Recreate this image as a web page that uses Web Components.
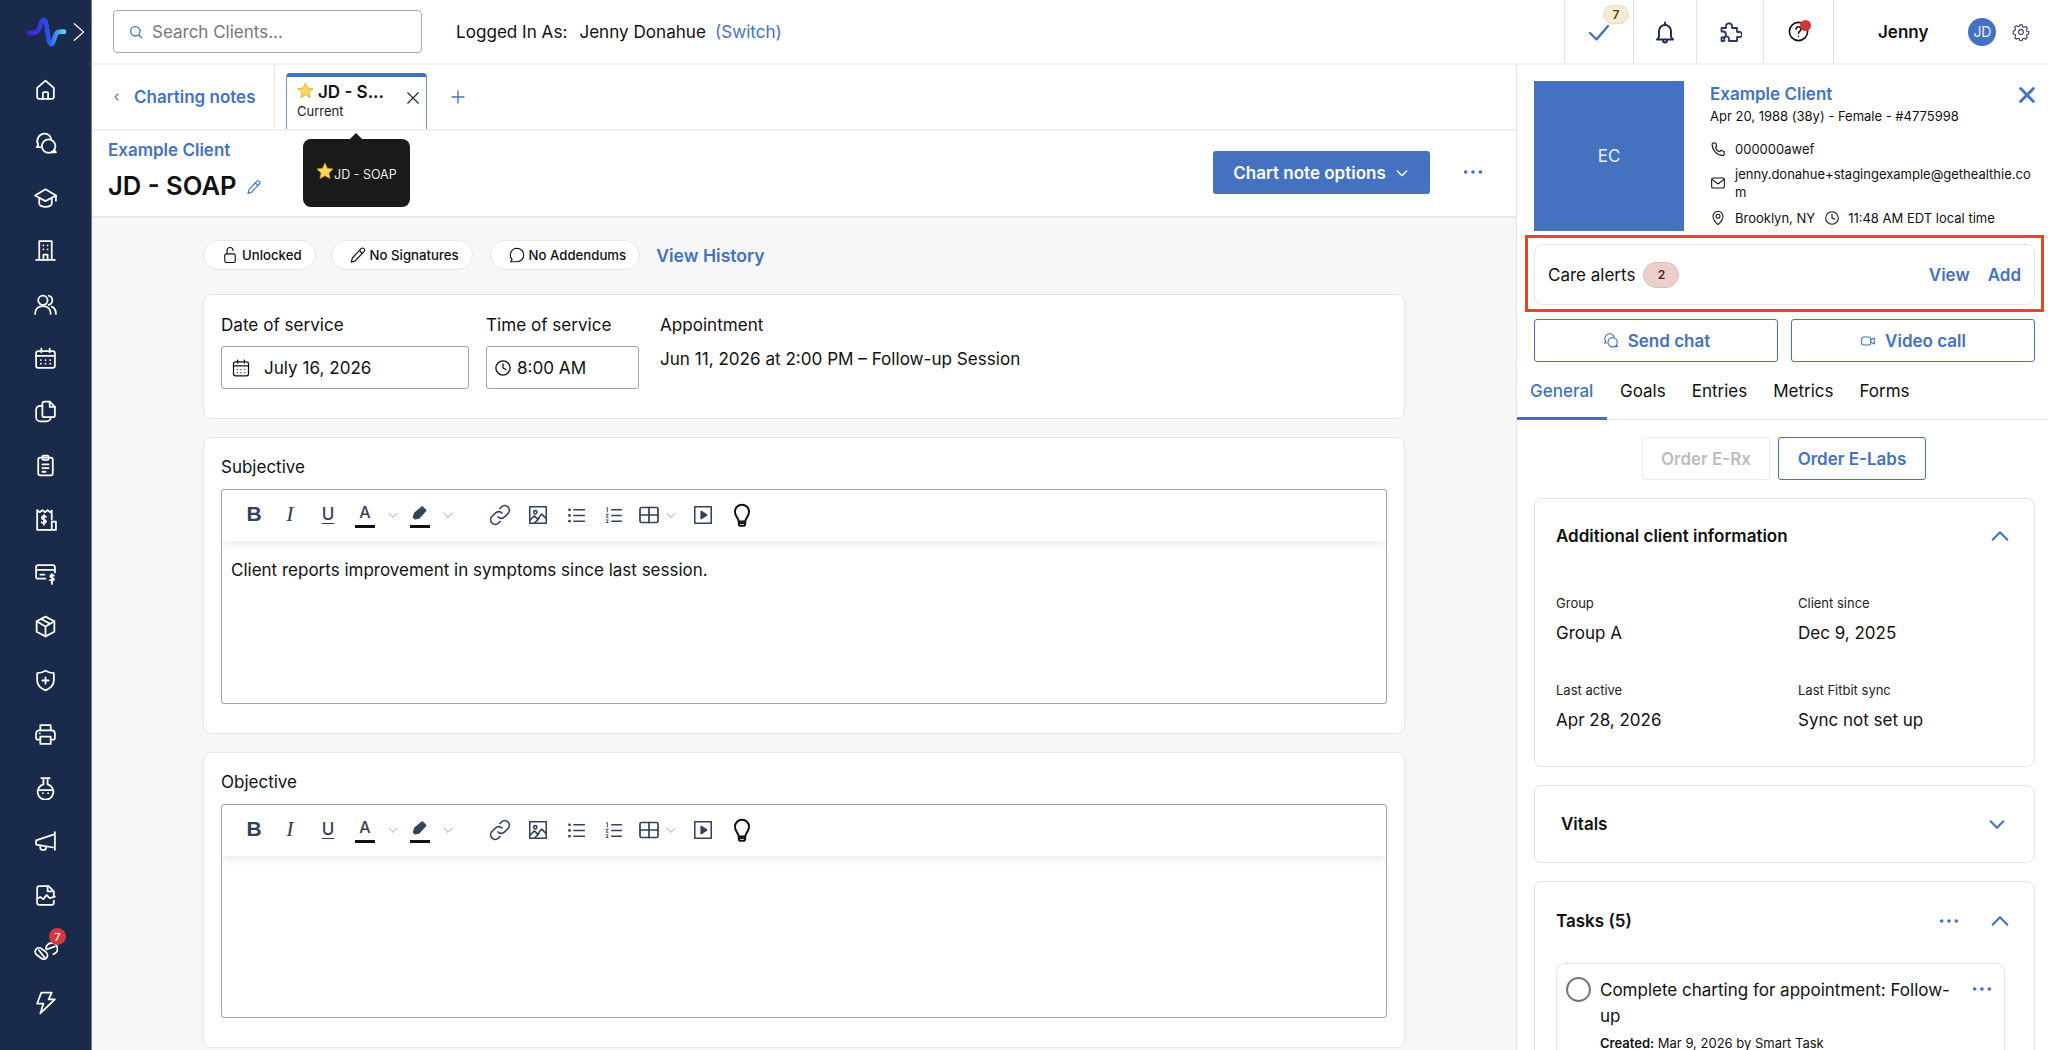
<!DOCTYPE html>
<html lang="en"><head><meta charset="utf-8"><title>Chart note</title>
<style>html,body{margin:0;padding:0;height:100%;overflow:hidden;background:#fff;font-family:Inter,"Liberation Sans",sans-serif;color:#111}</style>
</head><body>
<app-shell></app-shell>
<script>
const ICONS={
home:'<path d="M4 10.5 12 3.5l8 7V19a2 2 0 0 1-2 2H6a2 2 0 0 1-2-2z"/><path d="M9.5 21v-5.5a1 1 0 0 1 1-1h3a1 1 0 0 1 1 1V21"/>',
chats:'<path d="M7 15.5H3.5l1.6-2.2A7.2 7.2 0 0 1 10.300 2.500a7 7 0 0 1 7 4.500"/><circle cx="15" cy="14.500" r="6.500"/><path d="M18 20.500h4l-1.500-2"/>',
cap:'<path d="M12 4 2 10l10 5.500L22 10z"/><path d="M6 12.500V18c0 1.500 2.500 3 6 3s6-1.500 6-3v-5.500"/><path d="M22 10v5"/>',
building:'<path d="M6 21V3h12v18M3 21h18"/><path d="M10 21v-5h4v5M10 7h.01M14 7h.01M10 11h.01M14 11h.01"/>',
users:'<circle cx="9.500" cy="8" r="4.500"/><path d="M2 21c0-4.500 3-7.500 7.500-7.500s7.500 3 7.500 7.500"/><path d="M15 3.600a4.500 4.500 0 0 1 0 8.800M18 14c2.500 1 4 3.500 4 7"/>',
calendar:'<rect x="3" y="5" width="18" height="16" rx="2"/><path d="M3 9.500h18M8 2.500V6M16 2.500V6"/><path d="M7.500 13.500h.01M12 13.500h.01M16.500 13.500h.01M7.500 17h.01M12 17h.01M16.500 17h.01"/>',
files:'<path d="M11 2.500h5l5 5v8a2 2 0 0 1-2 2h-8a2 2 0 0 1-2-2v-11a2 2 0 0 1 2-2z"/><path d="M16 2.500v5h5"/><path d="M9 6.500H7a4 4 0 0 0-4 4v7a4 4 0 0 0 4 4h6a4 4 0 0 0 4-4"/>',
clip:'<rect x="5" y="4.500" width="14" height="17" rx="2"/><rect x="9" y="2.500" width="6" height="4" rx="1"/><path d="M9 11h6M9 14.500h6M9 18h3"/>',
receipt:'<path d="M16 22H4V3l2.500 2L9 3l2.500 2L14 3l2.500 2L18 3.500V12"/><path d="M18 14h4v8h-4zM16 22h2"/><path d="M12.500 9.500c-1-1-4-1-4 1s4 1 4 3.200-3 2-4.200 1M10.500 7.500v9.500"/>',
card:'<path d="M12 17H5a2 2 0 0 1-2-2V6a2 2 0 0 1 2-2h14a2 2 0 0 1 2 2v5"/><path d="M3 8.500h18M7 13h4"/><path d="M20 14c-1-1-3.500-1-3.500.7s3.500 1 3.500 2.800-2.500 1.700-3.800.8M18.200 12.500V22"/>',
box:'<path d="M12 2.500 20.500 7v10L12 21.500 3.500 17V7z"/><path d="M3.500 7 12 12l8.500-5M12 12v9.500M8 4.800l8.500 4.700"/>',
shield:'<path d="M12 2.500c2 1.500 5 2.500 8 2.500v7c0 4.500-3.500 7.500-8 9.500-4.500-2-8-5-8-9.500V5c3 0 6-1 8-2.500z"/><path d="M12 9v6M9 12h6"/>',
printer:'<path d="M7 8V3h10v5"/><path d="M7 17H5a2 2 0 0 1-2-2v-4a3 3 0 0 1 3-3h12a3 3 0 0 1 3 3v4a2 2 0 0 1-2 2h-2"/><rect x="7" y="14" width="10" height="7"/><path d="M6.500 11h.01"/>',
flask:'<path d="M8 3h8M10 3v6a7.500 7.500 0 1 0 4 0V3"/><path d="M5.500 14.500h13M9.500 17.500h.01M14.500 17.500h.01"/>',
mega:'<path d="M21 3v17M21 5 3 11v4l18 3"/><path d="M7 16v2a2 2 0 0 0 2 2h1.500a2 2 0 0 0 2-2v-.5"/>',
filechart:'<path d="M20 12V8l-5-5H6a2 2 0 0 0-2 2v14a2 2 0 0 0 2 2h12a2 2 0 0 0 2-2v-2"/><path d="M14 3v5h5"/><path d="M4 15l3-1.500 3 2 3-4 3 3 5-1.500"/>',
pills:'<rect x="1.500" y="13" width="13" height="7.500" rx="3.750" transform="rotate(38 8 16.750)"/><path d="m5.500 13.500 5.500 7"/><path d="M12.500 12a5.500 5.500 0 1 1 7 5.500"/><path d="M13 13l8-3"/>',
bolt:'<path d="M8 2.500h10l-3 6.500h6L7 22.500l3-9.500H4z"/>',
search:'<circle cx="11" cy="11" r="7"/><path d="m16.500 16.500 4 4"/>',
check:'<path d="m3 13 6.500 6.500L21 6"/>',
bell:'<path d="M6 17V11a6 6 0 0 1 12 0v6l2 2.500H4z"/><path d="M12 2.500V5M10 20.500a2 2 0 0 0 4 0"/>',
puzzle:'<path d="M3.500 8H7.500c.6 0 .9-.5.6-1a3 3 0 1 1 5.800 0c-.3.500 0 1 .6 1H19v3.500c0 .6.500.900 1 .6a2.700 2.700 0 1 1 0 4.800c-.5-.3-1 0-1 .6V21h-7.500c-.8 0-1-.6-.7-1.200a2.400 2.400 0 1 0-4.400 0c.3.600 0 1.200-.7 1.200H3.500v-3.500h1.500a3 3 0 0 0 0-6H3.500z"/>',
help:'<circle cx="12" cy="12" r="9.500"/><path d="M9.500 9.500a2.500 2.500 0 1 1 3.800 2.200c-.8.500-1.300 1-1.300 2M12 17h.01"/>',
gear:'<circle cx="12" cy="12" r="3.200"/><path d="M10.300 2.500h3.400l.5 2.600 1.800.8 2.300-1.400 2.200 2.400-1.400 2.200.7 1.800 2.600.6v3.200l-2.600.6-.7 1.800 1.400 2.200-2.200 2.400-2.300-1.400-1.800.8-.5 2.600h-3.400l-.5-2.600-1.800-.8-2.300 1.400-2.200-2.400 1.400-2.200-.7-1.800-2.600-.6V10.500l2.600-.6.700-1.800-1.400-2.200 2.200-2.400 2.300 1.400 1.800-.8z"/>',
close:'<path d="M5 5l14 14M19 5 5 19"/>',
plus:'<path d="M12 4v16M4 12h16"/>',
chevL:'<path d="m14 6-6 6 6 6"/>',chevR:'<path d="m8 3 10 9-10 9"/>',chevD:'<path d="m5 9 7 7 7-7"/>',chevU:'<path d="m4 16 8-8 8 8"/>',
pencil:'<path d="M16 3.500a2.800 2.800 0 0 1 4 4L8 20l-5 1.500L4.500 16z"/><path d="m14 6 4 4"/>',
marker:'<path d="M3 17.500 5 12 15 3.500l5 5-9 10-5.500 1.500z" fill="currentColor"/>',
phone:'<path d="M5 3h3.500l1.700 5-2.200 1.700a12 12 0 0 0 6.500 6.500l1.700-2.200 5 1.700V20a1.800 1.800 0 0 1-2 1.800A17 17 0 0 1 3.200 5 1.800 1.800 0 0 1 5 3z"/>',
mail:'<rect x="2.500" y="4.500" width="19" height="15" rx="2"/><path d="m3 6.500 9 7 9-7"/>',
pin:'<path d="M12 22s7.500-6.500 7.500-12.500a7.500 7.500 0 0 0-15 0C4.500 15.500 12 22 12 22z"/><circle cx="12" cy="9.500" r="3"/>',
clock:'<circle cx="12" cy="12" r="9.500"/><path d="M12 6.500V12l4 2"/>',
video:'<rect x="2.500" y="6" width="13.500" height="12" rx="3"/><path d="m16 10.500 5.500-3v9l-5.500-3"/>',
chat1:'<path d="M12 3a9 9 0 0 1 0 18H3.500l2-3A9 9 0 0 1 12 3z"/>',
lock:'<rect x="5" y="10.500" width="14" height="11.500" rx="2"/><path d="M8 10.500V6a4 4 0 0 1 8 0"/>',
cal2:'<rect x="3" y="4.500" width="18" height="17" rx="2.500"/><path d="M3 9.500h18M8 2.500V6M16 2.500V6"/><path d="M7.500 13.500h.01M12 13.500h.01M16.500 13.500h.01M7.500 17.500h.01M12 17.500h.01M16.500 17.500h.01"/>',
dots:'<circle cx="4" cy="12" r="2" fill="currentColor" stroke="none"/><circle cx="12" cy="12" r="2" fill="currentColor" stroke="none"/><circle cx="20" cy="12" r="2" fill="currentColor" stroke="none"/>',
link:'<path d="M10 14a4.500 4.500 0 0 0 6.500 0l3.500-3.500A4.500 4.500 0 0 0 13.500 4L12 5.500"/><path d="M14 10a4.500 4.500 0 0 0-6.500 0L4 13.500a4.500 4.500 0 0 0 6.500 6.500l1.500-1.500"/>',
image:'<rect x="3" y="3" width="18" height="18"/><circle cx="9" cy="9" r="1.800"/><path d="m3 18 5-5 3.500 3.500L16 11l5 5M8 21l5-5"/>',
ul:'<path d="M9 5.500h12M9 12h12M9 18.500h12"/><path d="M4 5.500h.01M4 12h.01M4 18.500h.01" stroke-width="3.200"/>',
ol:'<path d="M10 5.500h11M10 12h11M10 18.500h11"/><path d="M4 3.500 5 3v5M3.500 10.500h2.500L3.500 14H6M3.500 17h2.500l-1.200 1.500 1.200 1.500H3.500" stroke-width="1"/>',
table:'<rect x="3" y="4.500" width="18" height="15" rx="1.500"/><path d="M3 12h18M12 4.500v15"/>',
play:'<rect x="3" y="3" width="18" height="18"/><path d="M10 8v8l6-4z" fill="currentColor"/>',
bulb:'<path d="M9 18c0-3-3.500-4.500-3.500-9a6.500 6.500 0 0 1 13 0c0 4.500-3.500 6-3.500 9z"/><path d="M9 18v2a2 2 0 0 0 2 2h2a2 2 0 0 0 2-2v-2M9.500 19.500h5"/>'
};
const STAR='<svg xmlns="http://www.w3.org/2000/svg" viewBox="0 0 24 24" width="100%" height="100%"><path d="M12 1.500l3.200 7 7.600.9-5.600 5.200 1.500 7.500L12 18.300l-6.700 3.800 1.500-7.500L1.200 9.400l7.600-.9z" fill="#f8d65c" stroke="#d9a22c" stroke-width="1"/></svg>';

class El extends HTMLElement{
  constructor(){super();this.attachShadow({mode:'open'});}
  connectedCallback(){if(!this._r){this._r=1;this.shadowRoot.innerHTML=this.render();}}
}
customElements.define('x-icon',class extends El{
  render(){
    const s=this.getAttribute('size')||24,w=this.getAttribute('sw')||1.8;
    return `<style>:host{display:inline-flex;flex:none;width:${s}px;height:${s}px}svg{display:block}</style>
    <svg xmlns="http://www.w3.org/2000/svg" viewBox="0 0 24 24" width="${s}" height="${s}" fill="none" stroke="currentColor" stroke-width="${w}" stroke-linecap="round" stroke-linejoin="round">${ICONS[this.getAttribute('name')]||''}</svg>`;
  }
});
customElements.define('app-shell',class extends El{
  render(){return `<style>:host{display:grid;grid-template-columns:92px 1fr;width:100%;height:100vh;overflow:hidden}
  .main{display:flex;flex-direction:column;min-width:0;height:100vh}
  .work{display:flex;flex:1;min-height:0}</style>
  <side-nav></side-nav>
  <div class="main"><top-bar></top-bar><div class="work"><note-area></note-area><client-panel></client-panel></div></div>`}
});
customElements.define('side-nav',class extends El{
  render(){
    const names=['home','chats','cap','building','users','calendar','files','clip','receipt','card','box','shield','printer','flask','mega','filechart','pills','bolt'];
    return `<style>:host{display:block;background:#1a2a4a;color:#fff;border-right:1px solid #6f7d99;box-sizing:border-box;height:100vh;overflow:hidden}
    .logo{height:63px;position:relative;display:flex;align-items:center}
    .logo svg{display:block;margin-left:26px}
    .chev{color:#fff;margin-left:1px}
    .items{display:grid;grid-auto-rows:53.7px;justify-items:center;align-items:center;width:91px}
    .item{position:relative;display:flex}
    .b{position:absolute;left:16px;top:-8px;width:17px;height:17px;border-radius:50%;background:#d23a3a;color:#fff;font-size:11px;font-weight:500;display:flex;align-items:center;justify-content:center}</style>
    <div class="logo"><svg xmlns="http://www.w3.org/2000/svg" width="40" height="30" viewBox="26 16 40 30"><defs><linearGradient id="g" gradientUnits="userSpaceOnUse" x1="28" x2="64" y1="30" y2="30"><stop offset="0" stop-color="#4a1fd8"/><stop offset=".55" stop-color="#2b4ce8"/><stop offset="1" stop-color="#5cd4f0"/></linearGradient></defs><path d="M29 32c5 0 8 0 10-4 1.500-3.500 2-9 5-9 3.500 0 3 24 7 24 3.500 0 3-11 7-12 2-.5 4-.3 6-.3" fill="none" stroke="url(#g)" stroke-width="4.800" stroke-linecap="round"/></svg>
    <x-icon class="chev" name="chevR" size="22" sw="1.300"></x-icon></div>
    <div class="items">${names.map(n=>`<div class="item"><x-icon name="${n}" size="25" sw="1.700"></x-icon>${n==='pills'?'<span class="b">7</span>':''}</div>`).join('')}</div>`}
});
customElements.define('top-bar',class extends El{
  render(){return `<style>:host{display:flex;align-items:stretch;height:65px;box-sizing:border-box;border-bottom:2px solid #efefef;background:#fff;flex:none}
  .search{width:309px;height:43px;box-sizing:border-box;border:1px solid #a9a9a9;border-radius:4px;margin:10px 0 0 21px;display:flex;align-items:center;padding-left:14px;gap:8px;color:#777;font-size:17px}
  .search x-icon{color:#4472c0}
  .who{margin-left:34px;display:flex;align-items:center;font-size:17.100px;color:#111;height:63px}
  .who .n{margin-left:12px}.who .s{margin-left:9px;color:#4472c0}
  .sp{flex:1}
  .cell{border-left:1px solid #e2e2e2;display:flex;align-items:center;justify-content:center;position:relative;color:#1a2a4a;height:63px;box-sizing:border-box}
  .badge{position:absolute;left:38px;top:5px;width:26px;height:19px;border-radius:10px;background:#f6ead2;border:1px solid #e8dcc0;box-sizing:border-box;font-size:12px;font-weight:600;color:#4a3a20;display:flex;align-items:center;justify-content:center}
  .dot{position:absolute;left:36px;top:20px;width:11px;height:11px;border-radius:50%;background:#cf3535}
  .me{border-left:1px solid #e2e2e2;width:214px;display:flex;align-items:center;height:63px}
  .me b{font-size:17px;font-weight:600;margin-left:44px;color:#111}
  .av{width:28px;height:28px;border-radius:50%;background:#4472c0;color:#e8eefb;font-size:14px;display:flex;align-items:center;justify-content:center;margin-left:40px}
  .me x-icon{margin-left:16px;color:#2c3c5c}</style>
  <div class="search"><x-icon name="search" size="16" sw="2"></x-icon><span>Search Clients...</span></div>
  <div class="who"><span>Logged In As:</span><span class="n">Jenny Donahue</span><span class="s">(Switch)</span></div>
  <div class="sp"></div>
  <div class="cell" style="width:69px;color:#4472c0"><x-icon name="check" size="24" sw="2.400"></x-icon><span class="badge">7</span></div>
  <div class="cell" style="width:63px"><x-icon name="bell" size="24" sw="1.900"></x-icon></div>
  <div class="cell" style="width:67px;color:#2a3a5e"><x-icon name="puzzle" size="24" sw="1.800"></x-icon></div>
  <div class="cell" style="width:70px;color:#111"><x-icon name="help" size="23" sw="1.700"></x-icon><span class="dot"></span></div>
  <div class="me"><b>Jenny</b><span class="av">JD</span><x-icon name="gear" size="18" sw="1.400"></x-icon></div>`}
});
customElements.define('note-area',class extends El{
  render(){return `<style>:host{display:flex;flex-direction:column;flex:1;min-width:0;background:#f7f7f7;overflow:hidden}
  .body{padding:23px 111px 0 111px;display:flex;flex-direction:column;gap:18px}
  .chips{display:flex;align-items:center;height:28px;margin-bottom:7px}</style>
  <note-tabs></note-tabs><note-title></note-title>
  <div class="body">
    <div class="chips"><status-chip icon="lock">Unlocked</status-chip><status-chip icon="pencil" style="margin-left:15px">No Signatures</status-chip><status-chip icon="chat1" style="margin-left:17px">No Addendums</status-chip><link-text style="margin-left:16px">View History</link-text></div>
    <service-card></service-card>
    <editor-card label="Subjective" h="215" text="Client reports improvement in symptoms since last session."></editor-card>
    <editor-card label="Objective" h="214"></editor-card>
  </div>`}
});
customElements.define('link-text',class extends El{render(){return `<style>:host{display:inline-block;color:#4472c0;font-weight:600;font-size:17.600px}</style><slot></slot>`}});
customElements.define('status-chip',class extends El{
  render(){return `<style>:host{display:inline-flex;align-items:center;gap:3px;height:30px;box-sizing:border-box;padding:0 13px 0 17px;background:#fff;border:1px solid #e6e6e6;border-radius:15px;font-size:13.200px;font-weight:500;color:#111}</style><x-icon name="${this.getAttribute('icon')}" size="18" sw="1.500"></x-icon><slot></slot>`}
});
customElements.define('note-tabs',class extends El{
  render(){return `<style>:host{display:flex;height:66px;box-sizing:border-box;background:#fff;border-bottom:2px solid #efefef;flex:none}
  .back{width:183px;border-right:1px solid #e6e6e6;box-sizing:border-box;display:flex;align-items:center;color:#4472c0;font-size:17px;font-weight:600;padding-left:19px;gap:11px}
  .tab{margin:8px 0 0 11px;width:141px;height:56px;box-sizing:border-box;border:1.500px solid #6b93d6;border-bottom:0;border-top:4px solid #4472c0;border-radius:4px 4px 0 0;padding:3px 0 0 10px;position:relative;background:#fff}
  .t{display:flex;align-items:center;gap:4px;font-size:17px;font-weight:600;height:24px}
  .st{width:17px;height:17px;display:block;margin-top:-3px}
  .c{font-size:13px;color:#222;margin-top:-1px}
  .x{position:absolute;right:4px;top:12px;color:#222}
  .plus{color:#4472c0;margin:23px 0 0 22px}</style>
  <div class="back"><x-icon name="chevL" size="12" sw="2.200"></x-icon><span>Charting notes</span></div>
  <div class="tab"><div class="t"><span class="st">${STAR}</span><span>JD - S...</span></div><div class="c">Current</div><x-icon class="x" name="close" size="18" sw="1.500"></x-icon></div>
  <x-icon class="plus" name="plus" size="18" sw="1.800"></x-icon>`}
});
customElements.define('note-title',class extends El{
  render(){return `<style>:host{display:flex;height:87px;box-sizing:border-box;background:#fff;border-bottom:2px solid #e9e9e9;position:relative;flex:none;padding:9px 0 0 16px}
  .cl{color:#4472c0;font-size:17px;font-weight:600;line-height:20px}
  .h{display:flex;align-items:center;gap:9px;font-size:25.600px;font-weight:600;margin-top:9px;line-height:34px;color:#111}
  .h x-icon{color:#4472c0;margin-top:2px}
  .tip{position:absolute;left:211px;top:8px;width:107px;height:68px;background:#1a1a1a;border-radius:8px;color:#e8e8e8;font-size:12.500px;display:flex;align-items:center;padding:2px 0 0 13px;box-sizing:border-box}
  .tip:before{content:"";position:absolute;left:48px;top:-4px;width:10px;height:10px;background:#1a1a1a;transform:rotate(45deg)}
  .tip span.s{width:18px;height:18px;display:block;margin-top:-6px}
  .r{margin-left:auto;display:flex;align-items:flex-start;padding:11px 0 0 0}
  .btn{width:217px;height:43px;border-radius:3px;background:#4472c0;color:#fff;font-size:17px;font-weight:600;display:flex;align-items:center;justify-content:center;gap:8px;box-sizing:border-box}
  .d{color:#4472c0;margin:10px 32px 0 32px}</style>
  <div><div class="cl">Example Client</div><div class="h"><span>JD - SOAP</span><x-icon name="pencil" size="16" sw="1.700"></x-icon></div></div>
  <div class="tip"><span class="s">${STAR}</span><span>JD - SOAP</span></div>
  <div class="r"><div class="btn"><span>Chart note options</span><x-icon name="chevD" size="16" sw="2"></x-icon></div><x-icon class="d" name="dots" size="22"></x-icon></div>`}
});
customElements.define('service-card',class extends El{
  render(){return `<style>:host{display:flex;height:125px;box-sizing:border-box;background:#fff;border:1px solid #e4e4e4;border-radius:8px;padding:19px 17px;font-size:17.100px;color:#111}
  .l{line-height:22px;height:32px}
  .inp{height:43px;box-sizing:border-box;border:1px solid #a3a3a8;border-radius:3px;display:flex;align-items:center;font-size:17.100px}
  .v{line-height:22px;padding-top:2px}</style>
  <div style="width:248px"><div class="l">Date of service</div><div class="inp" style="padding-left:9px;gap:13px"><x-icon name="cal2" size="20" sw="1.500"></x-icon><span>July 16, 2026</span></div></div>
  <div style="width:153px;margin-left:17px"><div class="l">Time of service</div><div class="inp" style="padding-left:7px;gap:5px"><x-icon name="clock" size="18" sw="1.700"></x-icon><span>8:00 AM</span></div></div>
  <div style="margin-left:21px"><div class="l">Appointment</div><div class="v">Jun 11, 2026 at 2:00 PM – Follow-up Session</div></div>`}
});
customElements.define('editor-card',class extends El{
  render(){
    const t=this.getAttribute('text')||'',h=+this.getAttribute('h');
    const ic=(n,x,s=24)=>`<x-icon name="${n}" size="${s}" sw="1.700" style="position:absolute;left:${x-s/2}px;top:${25-s/2}px"></x-icon>`;
    const ch=x=>`<x-icon name="chevD" size="14" sw="1.500" style="position:absolute;left:${x-7}px;top:18px;color:#8a94a6"></x-icon>`;
    return `<style>:host{display:block;box-sizing:border-box;background:#fff;border:1px solid #e4e4e4;border-radius:8px;padding:18px 17px 0;height:${h+82}px;font-size:17px;color:#111}
    .l{line-height:22px;margin-bottom:11px}
    .ed{border:1px solid #a3a3a8;border-radius:3px;height:${h}px;box-sizing:border-box;overflow:hidden}
    .bar{height:51px;position:relative;box-shadow:0 4px 8px rgba(0,0,0,.07);color:#33415c}
    .f{position:absolute;top:12px;font-size:21px;line-height:24px;text-align:center;width:20px;color:#33415c}
    .txt{padding:18px 9px;line-height:22px;font-size:17px}
    .bl{position:absolute;top:35px;width:20px;height:3px;background:#111}</style>
    <div class="l">${this.getAttribute('label')}</div>
    <div class="ed"><div class="bar">
      <span class="f" style="left:22px;font-weight:700;font-family:'Liberation Sans',sans-serif">B</span>
      <span class="f" style="left:58px;font-style:italic;font-family:'Liberation Serif',serif;font-size:22px">I</span>
      <span class="f" style="left:96px;font-size:17px;text-decoration:underline;text-underline-offset:3px;font-weight:500">U</span>
      <span class="f" style="left:133px;font-size:16px;font-weight:500;top:10px">A</span><span class="bl" style="left:133px"></span>${ch(171)}
      <x-icon name="marker" size="18" sw="1.500" style="position:absolute;left:189px;top:14px;color:#33415c"></x-icon><span class="bl" style="left:188px"></span>${ch(226)}
      ${ic('link',278)}${ic('image',316,22)}${ic('ul',354,21)}${ic('ol',391,21)}${ic('table',427,24)}${ch(449)}${ic('play',481,22)}
      <x-icon name="bulb" size="26" sw="1.800" style="position:absolute;left:507px;top:12px;color:#111"></x-icon>
    </div><div class="txt">${t}</div></div>`}
});
customElements.define('client-panel',class extends El{
  render(){return `<style>:host{display:block;flex:none;width:532px;box-sizing:border-box;border-left:1px solid #e4e4e4;background:#fff;overflow:hidden;color:#111;height:985px}
  .head{display:flex;padding:16px 0 0 17px;height:150px;position:relative}
  .photo{width:150px;height:150px;background:#4472c0;color:#e8eefb;font-size:17px;display:flex;align-items:center;justify-content:center;flex:none}
  .info{margin-left:26px;flex:1;font-size:13px;min-width:0}
  .nm{color:#4472c0;font-size:17px;font-weight:600;line-height:20px;margin-top:3px}
  .sub{line-height:18px;margin-top:3px;height:31px}
  .row{display:flex;align-items:center;line-height:18px;gap:9px;margin-top:2px}
  .row x-icon{color:#111}
  .close{position:absolute;right:10px;top:19px;color:#4472c0}
  .care{margin:4px 4px 0 8px;border:3px solid #ef4326;padding:6px 6px 4px}
  .alert{height:61px;box-sizing:border-box;border:1px solid #e6e6e6;border-radius:8px;display:flex;align-items:center;padding:0 13px;font-size:17px}
  .pill{margin-left:8px;width:36px;height:26px;border-radius:13px;background:#eccfcb;border:1px solid #e0bdb8;box-sizing:border-box;color:#4a2020;font-size:12px;font-weight:600;display:flex;align-items:center;justify-content:center}
  .acts{margin-left:auto;display:flex;gap:18px;color:#4472c0;font-weight:600}
  .btns{display:flex;gap:13px;margin:7px 13px 0 17px}
  .b{flex:1;height:43px;box-sizing:border-box;border:1px solid #4472c0;border-radius:3px;color:#4472c0;font-weight:600;font-size:17px;display:flex;align-items:center;justify-content:center;gap:9px}
  .tabs{display:flex;height:58px;box-sizing:border-box;border-bottom:1px solid #e6e6e6;font-size:17px;font-weight:400;position:relative}
  .tabs span{padding:18px 13px 0;line-height:22px}
  .tabs .on{color:#4472c0;font-weight:500;border-bottom:3px solid #4472c0;height:58px;box-sizing:border-box;padding:18px 13px 0;width:90px}
  .order{display:flex;justify-content:center;gap:8px;margin:17px 0 0 3px}
  .o{height:43px;box-sizing:border-box;border-radius:3px;font-size:17px;font-weight:600;display:flex;align-items:center;justify-content:center}
  .stack{margin:18px 13px 0 17px;display:flex;flex-direction:column;gap:18px}
  .box{border:1px solid #e4e4e4;border-radius:8px;box-sizing:border-box;padding:0 22px 0 21px}
  .bh{display:flex;align-items:center;font-size:17px;font-weight:600}
  .bh x-icon{color:#4472c0}
  .grid{display:grid;grid-template-columns:242px 1fr;row-gap:35px;margin-top:46px}
  .k{font-size:13px;color:#222;line-height:20px}.val{font-size:17px;line-height:24px;margin-top:8px}
  .task{border:1px solid #e4e4e4;border-radius:8px;margin-top:31px;height:120px;padding:13px 0 0 43px;position:relative;font-size:17px;line-height:26px;margin-right:7px}
  .ring{position:absolute;left:9px;top:13px;width:25px;height:25px;border:2.500px solid #777;border-radius:50%;box-sizing:border-box}
  .td{position:absolute;right:11px;top:14px;color:#4472c0}
  .cr{font-size:13px;line-height:18px;margin-top:5px}</style>
  <div class="head"><div class="photo">EC</div><div class="info">
    <div class="nm">Example Client</div><div class="sub">Apr 20, 1988 (38y) - Female - #4775998</div>
    <div class="row" style="gap:9px"><x-icon name="phone" size="16" sw="1.600"></x-icon><span>000000awef</span></div>
    <div class="row" style="margin-top:7px;align-items:center"><x-icon name="mail" size="16" sw="1.600"></x-icon><span style="word-break:break-all;width:297px">jenny.donahue+stagingexample@gethealthie.com</span></div>
    <div class="row" style="margin-top:8px"><x-icon name="pin" size="16" sw="1.600"></x-icon><span>Brooklyn, NY</span><x-icon name="clock" size="16" sw="1.600"></x-icon><span style="margin-left:-1px">11:48 AM EDT local time</span></div>
  </div><x-icon class="close" name="close" size="22" sw="3"></x-icon></div>
  <div class="care"><div class="alert"><span>Care alerts</span><span class="pill">2</span><span class="acts"><span>View</span><span>Add</span></span></div></div>
  <div class="btns"><div class="b"><x-icon name="chats" size="17" sw="1.600"></x-icon><span>Send chat</span></div><div class="b"><x-icon name="video" size="16" sw="1.600"></x-icon><span>Video call</span></div></div>
  <div class="tabs"><span class="on">General</span><span>Goals</span><span>Entries</span><span>Metrics</span><span>Forms</span></div>
  <div class="order"><div class="o" style="width:128px;border:1px solid #ececec;color:#bdbdbd">Order E-Rx</div><div class="o" style="width:148px;border:1px solid #4472c0;color:#4472c0">Order E-Labs</div></div>
  <div class="stack">
    <div class="box" style="height:269px"><div class="bh" style="padding-top:26px;line-height:22px"><span>Additional client information</span><x-icon name="chevU" size="22" sw="2.200" style="margin-left:auto;margin-right:1px"></x-icon></div>
      <div class="grid"><div><div class="k">Group</div><div class="val">Group A</div></div><div><div class="k">Client since</div><div class="val">Dec 9, 2025</div></div><div><div class="k">Last active</div><div class="val">Apr 28, 2026</div></div><div><div class="k">Last Fitbit sync</div><div class="val">Sync not set up</div></div></div></div>
    <div class="box" style="height:78px;padding:0 26px"><div class="bh" style="height:76px"><span>Vitals</span><x-icon name="chevD" size="22" sw="2.200" style="margin-left:auto"></x-icon></div></div>
    <div class="box" style="height:260px"><div class="bh" style="padding-top:28px;line-height:22px"><span>Tasks (5)</span><x-icon name="dots" size="22" style="margin-left:auto"></x-icon><x-icon name="chevU" size="22" sw="2.200" style="margin-left:29px;margin-right:1px"></x-icon></div>
      <div class="task"><span class="ring"></span><x-icon class="td" name="dots" size="22"></x-icon><div style="width:360px">Complete charting for appointment: Follow-up</div><div class="cr"><b style="font-weight:600">Created:</b> Mar 9, 2026 by Smart Task</div></div></div>
  </div>`}
});
</script></body></html>
